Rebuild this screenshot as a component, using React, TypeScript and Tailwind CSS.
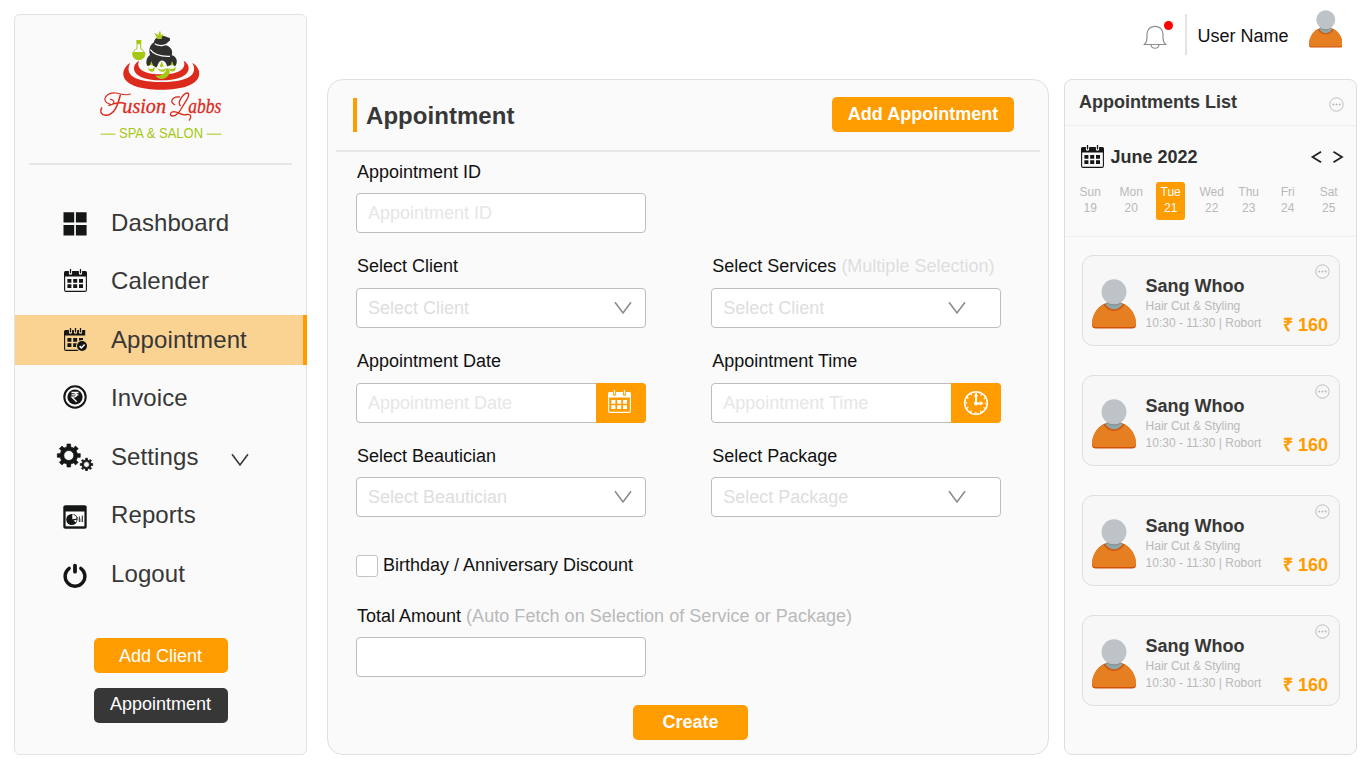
import type { ReactNode } from "react";

function gearPath(cx: number, cy: number, outer: number, root: number, hole: number, teeth: number) {
  const step = (Math.PI * 2) / teeth;
  const pt = (r: number, a: number) => `${(cx + r * Math.sin(a)).toFixed(2)} ${(cy - r * Math.cos(a)).toFixed(2)}`;
  const points: string[] = [];
  for (let i = 0; i < teeth; i++) {
    const a = i * step;
    points.push(pt(root, a - step * 0.27), pt(outer, a - step * 0.2), pt(outer, a + step * 0.2), pt(root, a + step * 0.27));
  }
  return `M${points.join("L")}Z M${cx - hole} ${cy}a${hole} ${hole} 0 1 0 ${hole * 2} 0a${hole} ${hole} 0 1 0 ${-hole * 2} 0Z`;
}

function Logo() {
  return (
    <svg viewBox="30 45 420 360" className="mr-px h-[120px] w-[140px]">
      <g fill="#dc2a1c">
        <path d="M151 158C116 180 112 238 244 239C376 238 372 180 337 158C351 184 343 216 244 216C145 216 137 184 151 158Z" />
        <path d="M177 152C149 168 154 211 244 211C334 211 339 168 311 152C319 172 305 193 244 193C183 193 169 172 177 152Z" />
      </g>
      <g fill="#2f302e">
        <path d="M222 97C222 85 236 78 251 78C259 79 263 83 268 83C274 89 267 100 256 105C274 110 280 124 275 136C286 138 292 148 290 158C289 164 286 168 283 172C279 160 274 160 268 172C260 172 260 160 255 156C246 148 238 152 234 163C231 174 226 175 221 172C217 160 211 160 207 170C196 168 196 144 210 135C206 122 208 105 222 97Z" />
      </g>
      <path d="M224 101C240 111 259 107 269 94M211 119C222 135 246 140 270 139" fill="none" stroke="#fafafa" strokeWidth="3.5" />
      <path d="M231 87C230 80 226 74 222 70C229 70 233 73 235 77C235 71 238 66 240 62C242 67 243 72 242 76C245 73 248 72 251 73C247 77 246 82 245 87Z" fill="#a5c814" />
      <path d="M171 97v19C154 123 154 147 176 149C198 147 198 123 182 116V97" fill="#fafafa" stroke="#a5c814" strokeWidth="3" />
      <path d="M169 90h15v6l-3 7h-9l-3-7zM158 126H195C199 139 190 149 176 150C162 149 155 139 158 126Z" fill="#a5c814" />
      <path d="M200 169C213 163 229 167 230 179C223 189 205 186 200 169ZM262 169C276 162 291 167 289 179C281 187 268 185 262 169ZM231 176C239 170 255 171 260 180C257 190 238 190 231 176Z" fill="#f7faf0" />
      <g fill="#a5c814">
        <path d="M204 174C212 180 219 177 224 170C227 190 208 190 204 174ZM265 174C273 180 281 177 287 171C289 188 271 189 265 174ZM232 174C241 181 250 181 259 175C257 189 237 188 232 174Z" />
        <path d="M214 153l5 13h-9zM245 153l6 17h-12zM276 153l5 13h-9z" />
        <path d="M260 174C280 181 264 206 247 207C237 207 229 203 225 196C242 200 257 191 260 174Z" />
      </g>
      <g fill="none" stroke="#dc2a1c" strokeLinecap="round">
        <path d="M86 286C104 286 107 269 91 268M91 283C57 274 82 244 108 249C124 252 138 258 151 252" strokeWidth="3.5" />
        <path d="M121 255C113 286 103 317 76 316C63 315 59 304 65 294M101 281C114 278 123 277 130 279" strokeWidth="4.5" />
        <path d="M284 284C266 276 279 258 298 261M301 287C291 278 308 252 321 249C331 248 325 264 313 281C302 299 293 318 278 318C267 317 270 306 281 305C297 305 306 320 322 313C335 312 334 324 328 330" strokeWidth="4" />
      </g>
      <g fill="#dc2a1c" stroke="#dc2a1c" strokeWidth="1" fontFamily="'Liberation Serif', serif" fontStyle="italic" fontSize="63">
        <text x="127" y="308" textLength="131" lengthAdjust="spacingAndGlyphs">usion</text>
        <text x="325" y="308" textLength="99" lengthAdjust="spacingAndGlyphs">abbs</text>
      </g>
      <path d="M62 372.5h44M380 372.5h44" stroke="#a5c814" strokeWidth="3" />
      <text x="117" y="383" fill="#a5c814" fontFamily="'Liberation Sans', sans-serif" fontSize="42" textLength="252" lengthAdjust="spacingAndGlyphs">
        SPA &amp; SALON
      </text>
    </svg>
  );
}

function CalendarIcon({ className, gap, check = false }: { className: string; gap: string; check?: boolean }) {
  return (
    <svg viewBox="0 0 23 23" className={className} fill="currentColor">
      <path d="M1.5 2H21.5Q23 2 23 3.5V7.5H0V3.5Q0 2 1.5 2Z" />
      <path d="M.6 7V21Q.6 22.4 2 22.4H21Q22.4 22.4 22.4 21V7" fill="none" stroke="currentColor" strokeWidth="1.1" />
      <path d="M3.4 10h4v3.7h-4zM9.2 10h4v3.7h-4zM15 10h4v3.7h-4zM3.4 15.3h4V19h-4zM9.2 15.3h4V19h-4zM15 15.3h4V19h-4z" />
      <path d="M6.5 0V4.2M16.5 0V4.2" stroke={gap} strokeWidth="3.2" strokeLinecap="round" />
      <path d="M6.5 .4V3.8M16.5 .4V3.8" stroke="currentColor" strokeWidth="1.3" strokeLinecap="round" />
      {check && (
        <>
          <path d="M11.5 0V4.2" stroke={gap} strokeWidth="3.2" strokeLinecap="round" />
          <path d="M11.5 .4V3.8" stroke="currentColor" strokeWidth="1.3" strokeLinecap="round" />
          <path d="M21.2 0H23V23H21.2Z" fill={gap} />
          <circle cx="18" cy="18" r="6" fill={gap} />
          <circle cx="18" cy="18" r="5" />
          <path d="M15.6 18.1l1.8 1.8 3.2-3.5" fill="none" stroke="#fff" strokeWidth="1.5" />
        </>
      )}
    </svg>
  );
}

function DashboardIcon() {
  return (
    <svg viewBox="0 0 24 24" className="mt-[3px] h-6 w-6" fill="currentColor">
      <path d="M.5 .2h10.7v10.3H.5zM12.9 .2h10.7v10.3H12.9zM.5 12.9h10.7v10.5H.5zM12.9 12.9h10.7v10.5H12.9z" />
    </svg>
  );
}

function RupeeIcon() {
  return (
    <svg viewBox="0 0 24 24" className="h-6 w-6">
      <circle cx="12" cy="12" r="10.7" fill="none" stroke="currentColor" strokeWidth="2" />
      <circle cx="12" cy="12" r="7.6" fill="currentColor" />
      <path d="M8.5 7.5h7M8.5 9.9h7M10 7.5c5 0 4.8 4.7 0 4.7H9l4.7 4.5" fill="none" stroke="#fff" strokeWidth="1.3" />
    </svg>
  );
}

function GearsIcon() {
  return (
    <svg viewBox="0 0 38 28" className="h-7 w-[38px]" fill="currentColor" fillRule="evenodd" stroke="currentColor" strokeWidth=".7" strokeLinejoin="round">
      <path d={gearPath(12.8, 12.5, 11.6, 8.8, 5, 8)} />
      <path d={gearPath(30.5, 21.5, 6.3, 4.6, 2.9, 8)} />
    </svg>
  );
}

function ReportsIcon() {
  return (
    <svg viewBox="0 0 24 24" className="h-6 w-6">
      <rect x=".3" y=".3" width="23.4" height="23.4" rx="2" fill="currentColor" />
      <rect x="2.6" y="6.5" width="18.8" height="14.8" fill="#fff" />
      <circle cx="8.8" cy="14.5" r="5.6" fill="currentColor" />
      <path d="M9.3 14.2V9.5A5 5 0 0 1 13.8 13.5ZM10.5 15.8l3-1.2-.3 3z" fill="#fff" />
      <path d="M11 9.3l3.3 2.7-.3 3" fill="none" stroke="currentColor" strokeWidth=".7" />
      <path d="M16.3 11.5V17M19.3 10.5V17" stroke="currentColor" strokeWidth="1" />
      <path d="M17.8 13.5V17" stroke="#777" strokeWidth=".8" />
    </svg>
  );
}

function PowerIcon() {
  return (
    <svg viewBox="0 0 24 24" className="h-6 w-6 overflow-visible" fill="none" stroke="currentColor" strokeLinecap="round">
      <path d="M6.2 5.3A9.9 9.9 0 1 0 17.8 5.3" strokeWidth="3.4" />
      <path d="M12 2.7V8.7" strokeWidth="3.8" />
    </svg>
  );
}

function ClockIcon() {
  return (
    <svg viewBox="0 0 26 26" className="h-[26px] w-[26px]" fill="none" stroke="currentColor">
      <circle cx="13" cy="13" r="11.3" strokeWidth="1.6" />
      <circle cx="13" cy="13" r="9.6" strokeWidth="1.8" strokeDasharray="1.2 3.827" strokeDashoffset=".6" />
      <path d="M13 3.5V13.5H19" strokeWidth="2" />
      <path d="M10.8 6.5L13 3l2.2 3.5zM17.5 11l3 2.3-3 2.3z" fill="currentColor" stroke="none" />
      <circle cx="13" cy="13.5" r="1.9" fill="currentColor" stroke="none" />
    </svg>
  );
}

function Chevron({ className }: { className: string }) {
  return (
    <svg viewBox="0 0 18 14" className={className} fill="none" stroke="currentColor" strokeWidth="1.6">
      <path d="M1 1.2L9 12L17 1.2" />
    </svg>
  );
}

function DotsIcon() {
  return (
    <svg viewBox="0 0 15 15" className="h-[15px] w-[15px] text-[#b9b9b9]" fill="currentColor">
      <circle cx="7.5" cy="7.5" r="6.7" fill="none" stroke="currentColor" strokeWidth=".9" />
      <circle cx="4.3" cy="7.5" r="1" />
      <circle cx="7.5" cy="7.5" r="1" />
      <circle cx="10.7" cy="7.5" r="1" />
    </svg>
  );
}

function Avatar({ className }: { className: string }) {
  return (
    <svg viewBox="0 0 44 50" className={className}>
      <path d="M12 25C4 29 0 38 0 46Q0 49.5 4 49.5H40Q44 49.5 44 46C44 38 40 29 32 25Z" fill="#cf5208" />
      <path d="M12 25C4 29 0 37 0 44.5Q0 48 4 48H40Q44 48 44 44.5C44 37 40 29 32 25Z" fill="#e57f22" />
      <path d="M11.5 25.3C16 34 28 34 32.5 25.3L30 24H14Z" fill="#cf5208" />
      <path d="M13 24.3C16.5 32.5 27.5 32.5 31 24.3Z" fill="#94a3a3" />
      <path d="M14 22C17 28 27 28 30 22Z" fill="#7f8c8d" />
      <circle cx="22" cy="12.8" r="12.5" fill="#bdc3c7" />
    </svg>
  );
}

function NavItem({ icon, label, active = false, trailing }: { icon: ReactNode; label: string; active?: boolean; trailing?: ReactNode }) {
  return (
    <a className={`flex h-[50px] items-center text-2xl text-[#373737] ${active ? "border-r-4 border-[#ff9c00] bg-[#fad393]" : ""}`}>
      <span className="ml-[40px] flex w-[40px] justify-center text-[#141515]">{icon}</span>
      <span className="ml-4 tracking-[0.1px]">{label}</span>
      {trailing}
    </a>
  );
}

function Sidebar() {
  return (
    <aside className="mt-[13.5px] flex h-[741px] w-[293px] flex-col rounded-md border border-[#e2e2e2] bg-[#fafafa]">
      <div className="mx-3.5 flex h-[150px] justify-center border-b-2 border-[#e6e6e6] pt-2.5">
        <Logo />
      </div>
      <nav className="-mr-px mt-[33px] flex flex-col gap-[8.5px]">
        <NavItem icon={<DashboardIcon />} label="Dashboard" />
        <NavItem icon={<CalendarIcon className="-mt-[2px] h-[23px] w-[23px]" gap="#fafafa" />} label="Calender" />
        <NavItem icon={<CalendarIcon className="-mt-px h-[23px] w-[23px]" gap="#fad393" check />} label="Appointment" active />
        <NavItem icon={<span className="-mt-[3px]"><RupeeIcon /></span>} label="Invoice" />
        <NavItem icon={<GearsIcon />} label="Settings" trailing={<Chevron className="ml-8 mt-1.5 h-3.5 w-[18px]" />} />
        <NavItem icon={<span className="mt-[3px]"><ReportsIcon /></span>} label="Reports" />
        <NavItem icon={<span className="mt-0.5"><PowerIcon /></span>} label="Logout" />
      </nav>
      <div className="mt-[39.5px] flex flex-col items-center gap-[15px] text-lg text-white">
        <button className="h-[35px] w-[134px] rounded-[5px] bg-[#ff9c00]">Add Client</button>
        <button className="h-[35px] w-[134px] rounded-[5px] bg-[#373737] pb-[3px]">Appointment</button>
      </div>
    </aside>
  );
}

function Header() {
  return (
    <header className="flex h-[79px] justify-end pr-6">
      <div className="relative mt-[25px]">
        <svg viewBox="0 0 24 25" className="h-[25px] w-6" fill="none" stroke="#8e8e8e" strokeWidth="1.2">
          <path d="M1 19.5C4 17.5 4 15 4 9C4 4 8 1.3 12 1.3S20 4 20 9C20 15 20 17.5 23 19.5Z" strokeLinejoin="round" />
          <path d="M8 19.5C8.5 24.5 15.5 24.5 16 19.5" />
        </svg>
        <span className="absolute -right-1.5 -top-[4.5px] h-[9px] w-[9px] rounded-full bg-[#ff0000]" />
      </div>
      <div className="ml-[18px] mt-3.5 h-[41px] w-0.5 bg-[#e3e3e3]" />
      <span className="ml-2.5 mt-[22px] text-lg text-[#111]">User Name</span>
      <Avatar className="ml-5 mt-2.5 h-[38px] w-[33.5px]" />
    </header>
  );
}

function Field({ label, hint, children }: { label: string; hint?: ReactNode; children: ReactNode }) {
  return (
    <div className="flex h-[94.7px] flex-col">
      <label className="h-[33.5px] whitespace-nowrap pl-px text-lg leading-6 text-[#111]">
        {label} {hint}
      </label>
      {children}
    </div>
  );
}

const box = "flex h-10 w-[290px] items-center overflow-hidden rounded border border-[#bdbdbd] bg-white pl-[11px] text-lg";

function TextBox({ placeholder, icon }: { placeholder?: string; icon?: ReactNode }) {
  return (
    <div className="relative w-[290px]">
      <div className={`${box} text-[#e6e6e6]`}>{placeholder}</div>
      {icon && (
        <span className="absolute right-0 top-0 flex h-10 w-[50px] items-center justify-center rounded-r bg-[#ff9c00] text-white">{icon}</span>
      )}
    </div>
  );
}

function SelectBox({ placeholder, inset = false }: { placeholder: string; inset?: boolean }) {
  return (
    <div className={`${box} justify-between text-[#dedede] ${inset ? "pr-[34px]" : "pr-[13px]"}`}>
      {placeholder}
      <Chevron className="h-3.5 w-[18px] text-[#8c8c8c]" />
    </div>
  );
}

function AppointmentForm() {
  return (
    <main className="h-[676px] w-[722px] rounded-2xl border border-[#e0e0e0] bg-[#fafafa] px-2">
      <div className="flex h-[72px] items-center justify-between border-b-2 border-[#e8e8e8] pl-[17px] pr-[26px]">
        <h1 className="flex h-[34px] items-center border-l-4 border-[#ff9c00] pl-[9px] pt-0.5 text-2xl font-bold tracking-[0.05px] text-[#373737]">Appointment</h1>
        <button className="mb-0.5 h-[35px] w-[182px] rounded-[5px] bg-[#ff9c00] text-lg font-bold text-white">Add Appointment</button>
      </div>
      <form className="grid grid-cols-[355.3px_290px] pl-5 pt-[7.7px]">
        <Field label="Appointment ID">
          <TextBox placeholder="Appointment ID" />
        </Field>
        <div />
        <Field label="Select Client">
          <SelectBox placeholder="Select Client" />
        </Field>
        <Field label="Select Services" hint={<span className="text-[#dedede]">(Multiple Selection)</span>}>
          <SelectBox placeholder="Select Client" inset />
        </Field>
        <Field label="Appointment Date">
          <TextBox placeholder="Appointment Date" icon={<CalendarIcon className="-mt-0.5 mr-[3px] h-[23px] w-[23px]" gap="#ff9c00" />} />
        </Field>
        <Field label="Appointment Time">
          <TextBox placeholder="Appointment Time" icon={<ClockIcon />} />
        </Field>
        <Field label="Select Beautician">
          <SelectBox placeholder="Select Beautician" />
        </Field>
        <Field label="Select Package">
          <SelectBox placeholder="Select Package" inset />
        </Field>
      </form>
      <div className="mt-[14.5px] flex items-start gap-[5px] pl-5 text-lg leading-6 text-[#111]">
        <span className="mt-0.5 h-[22px] w-[22px] rounded-[3px] border border-[#c4c4c4] bg-white" />
        Birthday / Anniversary Discount
      </div>
      <div className="mt-[27px] pl-5">
        <Field label="Total Amount" hint={<span className="tracking-[0.04px] text-[#b9b9b9]">(Auto Fetch on Selection of Service or Package)</span>}>
          <TextBox />
        </Field>
      </div>
      <div className="mt-[6px] flex pl-[297px]">
        <button className="h-[35px] w-[115px] rounded-[5px] bg-[#ff9c00] text-lg font-bold text-white">Create</button>
      </div>
    </main>
  );
}

const days = [
  ["Sun", 19],
  ["Mon", 20],
  ["Tue", 21],
  ["Wed", 22],
  ["Thu", 23],
  ["Fri", 24],
  ["Sat", 25],
] as const;

function AppointmentCard() {
  return (
    <article className="flex h-[91px] rounded-[11px] border border-[#dfdfdf] bg-[#f7f7f7] pl-[8.6px]">
      <Avatar className="mt-[23px] h-[50px] w-11 shrink-0" />
      <div className="ml-2.5 mt-[18px] w-[134px] whitespace-nowrap text-xs text-[#b9b9b9]">
        <h3 className="text-lg font-bold leading-6 text-[#373737]">Sang Whoo</h3>
        <p className="leading-4">Hair Cut &amp; Styling</p>
        <p className="leading-[18px]">10:30 - 11:30 | Robort</p>
      </div>
      <div className="flex flex-1 flex-col items-end">
        <span className="mr-[9px] mt-2">
          <DotsIcon />
        </span>
        <span className="mr-[11px] mt-[34px] whitespace-nowrap text-lg font-bold leading-6 text-[#ff9c00]">₹ 160</span>
      </div>
    </article>
  );
}

function AppointmentsList() {
  return (
    <aside className="h-[676px] w-[293px] rounded-lg border border-[#dedede] bg-[#fafafa]">
      <div className="flex h-[46px] items-center justify-between border-b border-[#f0f0f0] pl-3.5 pr-[12.5px]">
        <h2 className="mb-0.5 text-lg font-bold text-[#373737]">Appointments List</h2>
        <span className="mt-1">
          <DotsIcon />
        </span>
      </div>
      <div className="h-[111px] border-b border-[#f0f0f0] pl-[10.4px]">
        <div className="flex h-14 items-center pl-[6px] pt-[5px]">
          <CalendarIcon className="h-[23px] w-[23px] text-[#141515]" gap="#fafafa" />
          <span className="ml-[6px] text-lg font-bold text-[#2f2f2f]">June 2022</span>
          <svg viewBox="0 0 34 14" className="ml-auto mr-3 h-3.5 w-[34px]" fill="none" stroke="#222" strokeWidth="1.8">
            <path d="M11 1.7L2.5 7L11 12.3M23.5 1.7L32 7L23.5 12.3" />
          </svg>
        </div>
        <div className="grid grid-cols-[41px_39.5px_41px_37px_39px_41px_29px] text-xs leading-4 text-[#b9b9b9]">
          {days.map(([name, date]) => (
            <div key={date} className={`flex h-[37.5px] w-[29.5px] flex-col items-center rounded-[3px] pt-0.5 ${date === 21 ? "bg-[#ff9c00] text-white" : ""}`}>
              <span>{name}</span>
              <span>{date}</span>
            </div>
          ))}
        </div>
      </div>
      <div className="flex flex-col gap-[29px] pl-[17px] pr-4 pt-[18px]">
        <AppointmentCard />
        <AppointmentCard />
        <AppointmentCard />
        <AppointmentCard />
      </div>
    </aside>
  );
}

export default function App() {
  return (
    <div className="flex h-[768px] w-[1366px] gap-5 overflow-hidden bg-white pl-3.5 font-['Liberation_Sans',sans-serif]">
      <Sidebar />
      <div className="flex flex-1 flex-col">
        <Header />
        <div className="flex gap-[15px]">
          <AppointmentForm />
          <AppointmentsList />
        </div>
      </div>
    </div>
  );
}
